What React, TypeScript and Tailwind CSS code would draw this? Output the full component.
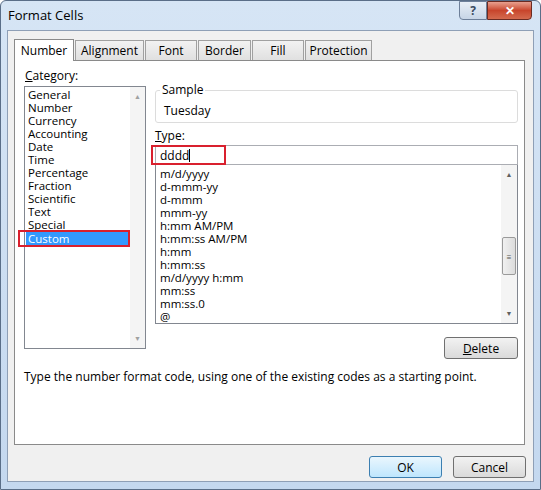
import React from "react";

const cats = ["General","Number","Currency","Accounting","Date","Time","Percentage","Fraction","Scientific","Text","Special","Custom"];
const types = ["m/d/yyyy","d-mmm-yy","d-mmm","mmm-yy","h:mm AM/PM","h:mm:ss AM/PM","h:mm","h:mm:ss","m/d/yyyy h:mm","mm:ss","mm:ss.0","@"];

const btn = "h-[22px] w-[73px] border rounded-[3px] flex items-center justify-center";

export default function App() {
  const tabs = [["Alignment",69],["Font",52],["Border",53],["Fill",52],["Protection",67]] as const;
  return (
    <div className="w-[541px] h-[490px] text-[12px] leading-[13px] text-black relative overflow-hidden rounded-t-[6px] border border-[#5a6e88] bg-gradient-to-b from-[#d6e5f5] to-[#c4d8ef] flex flex-col px-[6px] pb-[7px]" style={{ fontFamily: '"Segoe UI","Open Sans",sans-serif' }}>
      <div className="h-[29px] flex items-center pl-[1px] text-[13px] shrink-0">Format Cells</div>
      <div className="absolute top-0 right-[8px] flex">
        <div className="w-[28px] h-[19px] border border-[#6d7f99] rounded-bl-[4px] bg-gradient-to-b from-[#e8eef6] to-[#c7d5e6] flex items-center justify-center text-[#3a4a60] text-[12px] font-bold">?</div>
        <div className="w-[45px] h-[19px] border border-[#6b2b22] rounded-br-[4px] bg-gradient-to-b from-[#e8a08f] via-[#c8452c] to-[#d46a4e] flex items-center justify-center text-white text-[12px] font-bold">✕</div>
      </div>
      <div className="flex-1 bg-[#f0f0f0] border border-[#8e9fb6] flex flex-col px-[6px] pt-[8px]">
        <div className="flex items-end relative z-10 -mb-[1px]">
          <div className="w-[60px] h-[22px] bg-white border border-b-0 border-[#8a8a8a] flex items-center justify-center">Number</div>
          {tabs.map(([t,w]) => (
            <div key={t} style={{ width: w }} className="h-[20px] ml-[1px] mb-[1px] bg-gradient-to-b from-[#f2f2f2] to-[#e0e0e0] border border-b-0 border-[#a0a0a0] flex items-center justify-center">{t}</div>
          ))}
        </div>
        <div className="h-[385px] w-[511px] bg-white border border-[#8a8a8a] flex flex-col pl-[9px] pt-[8px]">
          <div className="flex gap-[9px]">
            <div className="flex flex-col">
              <div className="h-[17px] pl-[1px]"><u>C</u>ategory:</div>
              <div className="relative w-[122px] h-[263px] border border-[#828790] bg-white flex">
                <div className="flex-1 pt-[1px] text-[11.5px]">
                  {cats.map(c => (
                    <div key={c} className={c === "Custom" ? "relative ml-[1px] pl-[2px] bg-[#3399ff] text-white h-[14px] flex items-center" : "pl-[3px] h-[13px] flex items-center"}>
                      {c}
                      {c === "Custom" && <div className="absolute -left-[8px] -top-[1px] w-[112px] h-[17px] border-2 border-[#d9202e]" />}
                    </div>
                  ))}
                </div>
                <div className="w-[15px] bg-[#f4f4f4] flex flex-col justify-between items-center py-[3px] text-[7px] text-[#a0a0a0]"><span>▲</span><span>▼</span></div>
              </div>
            </div>
            <div className="flex flex-col w-[363px] pt-[21px]">
              <div className="relative h-[33px] border border-[#dcdcdc] rounded-[3px] pl-[8px] pt-[13px]">
                <div className="absolute left-[4px] -top-[8px] bg-white px-[2px]">Sample</div>
                Tuesday
              </div>
              <div className="mt-[6px] h-[16px]"><u>T</u>ype:</div>
              <div className="relative h-[20px] border border-[#abadb3] flex items-center pl-[4px]">
                dddd<span className="w-[1px] h-[13px] bg-black" />
                <div className="absolute -left-[5px] -top-[1px] w-[75px] h-[20px] border-2 border-[#d9202e]" />
              </div>
              <div className="h-[159px] border border-t-0 border-[#828790] flex">
                <div className="flex-1 pt-[2px] text-[11.5px]">
                  {types.map(t => <div key={t} className="pl-[4px] h-[13px] flex items-center">{t}</div>)}
                </div>
                <div className="w-[16px] bg-[#f4f4f4] flex flex-col items-center justify-between py-[3px] text-[7px] text-[#606060]">
                  <span>▲</span>
                  <div className="w-[14px] h-[38px] mt-[56px] border border-[#9a9a9a] rounded-[2px] bg-gradient-to-r from-[#f0f0f0] to-[#dcdcdc] flex items-center justify-center text-[8px] text-[#555]">≡</div>
                  <span className="mt-auto">▼</span>
                </div>
              </div>
              <div className="flex justify-end mt-[13px]">
                <div className={`${btn} w-[74px] border-[#707070] bg-gradient-to-b from-[#f2f2f2] to-[#dadada]`}><span><u>D</u>elete</span></div>
              </div>
            </div>
          </div>
          <div className="mt-[11px]">Type the number format code, using one of the existing codes as a starting point.</div>
        </div>
        <div className="flex justify-end gap-[11px] mt-[11px] pr-[1px]">
          <div className={`${btn} border-[#3c7fb1] bg-gradient-to-b from-[#eaf6fd] to-[#bee6fd]`}>OK</div>
          <div className={`${btn} border-[#707070] bg-gradient-to-b from-[#f2f2f2] to-[#dadada]`}>Cancel</div>
        </div>
      </div>
    </div>
  );
}
